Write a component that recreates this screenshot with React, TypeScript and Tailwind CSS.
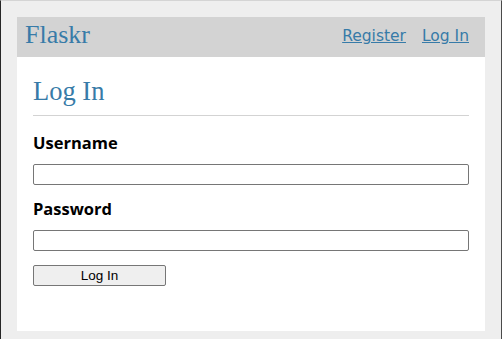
import React, { useState } from 'react';

const serif = "font-['Liberation_Serif',serif]";

const App = () => {
  const [username, setUsername] = useState('');
  const [password, setPassword] = useState('');

  const handleSubmit = (e: React.FormEvent) => {
    e.preventDefault();
  };

  return (
    <div className="min-h-screen bg-[#eeeeee] border-t border-t-[#d4d4d4] border-l border-l-[#262626] border-r border-r-[#4a4a4a] p-4 font-['DejaVu_Sans',sans-serif]">
      <nav className="flex items-center h-[40px] bg-[#d3d3d3] px-2">
        <h1 className={`flex-auto m-0 mb-[5px] text-[26px] leading-[26px] font-normal text-[#377ba8] ${serif}`}>
          Flaskr
        </h1>
        <ul className="flex list-none m-0 p-0">
          <li>
            <a href="#" className="block p-2 text-[15.5px] text-[#377ba8] underline">
              Register
            </a>
          </li>
          <li>
            <a href="#" className="block p-2 text-[15.5px] text-[#377ba8] underline">
              Log In
            </a>
          </li>
        </ul>
      </nav>

      <section className="bg-white px-4 pb-[45px]">
        <header className="flex items-end border-b border-b-[#d3d3d3]">
          <h1 className={`flex-auto mt-[14px] mb-[4px] h-[40px] text-[26.5px] leading-[40px] font-normal text-[#377ba8] ${serif}`}>
            Log In
          </h1>
        </header>

        <form onSubmit={handleSubmit} className="flex flex-col mt-4 font-['Open_Sans',sans-serif]">
          <label htmlFor="username" className="block text-[16.5px] leading-[21px] font-bold text-black mb-[11px]">
            Username
          </label>
          <input
            id="username"
            name="username"
            required
            className="block h-[21px] w-full bg-white border border-[#767676] rounded-[2px] mb-[13px] px-1 text-[13px] outline-none"
            value={username}
            onChange={e => setUsername(e.target.value)}
          />

          <label htmlFor="password" className="block text-[16.5px] leading-[21px] font-bold text-black mb-[11px]">
            Password
          </label>
          <input
            id="password"
            type="password"
            name="password"
            required
            className="block h-[21px] w-full bg-white border border-[#767676] rounded-[2px] mb-[14px] px-1 text-[13px] outline-none"
            value={password}
            onChange={e => setPassword(e.target.value)}
          />

          <button
            type="submit"
            className="h-[21px] w-[133px] bg-[#efefef] border border-[#767676] rounded-[2px] text-[13.5px] leading-[19px] text-black font-['Liberation_Sans',sans-serif]"
          >
            Log In
          </button>
        </form>
      </section>
    </div>
  );
};

export default App;
